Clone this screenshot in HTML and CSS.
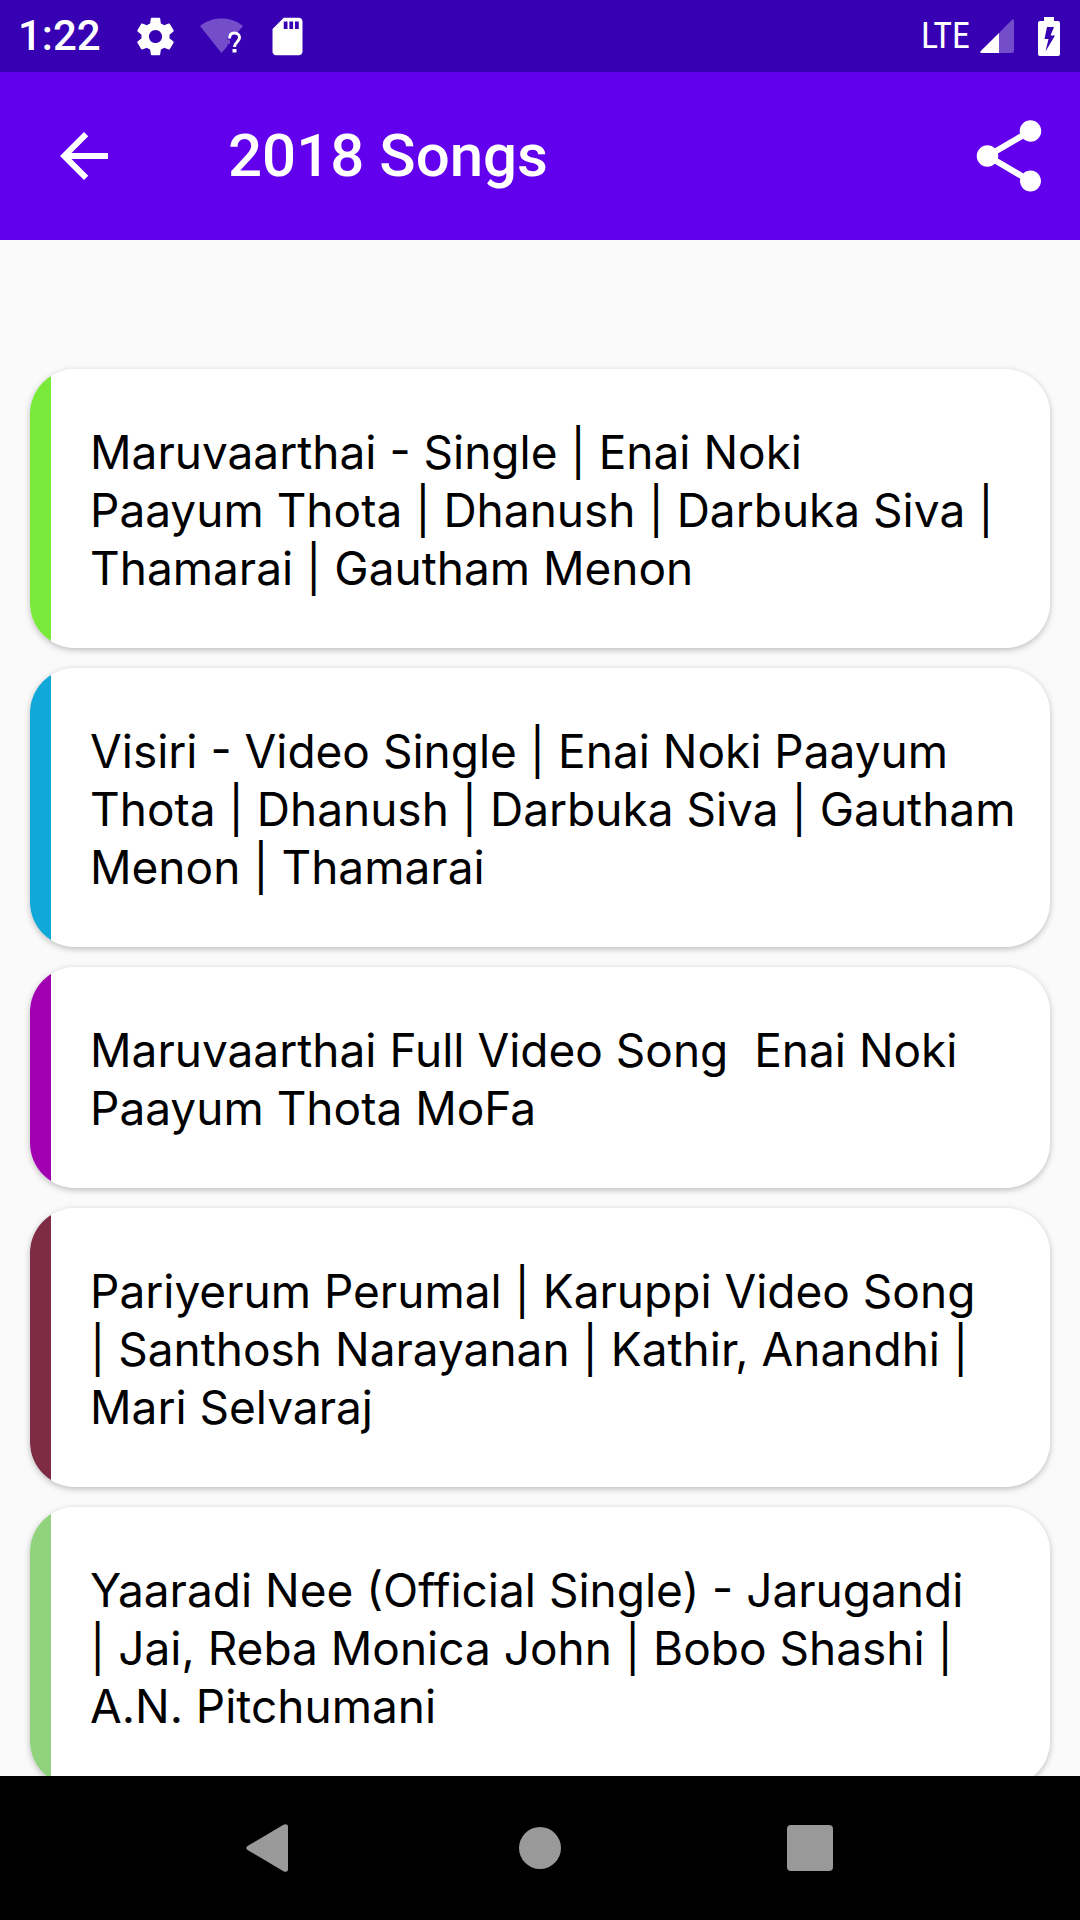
FILE: index.html
```html
<!DOCTYPE html>
<html lang="en">
<head>
<meta charset="utf-8">
<meta name="viewport" content="width=device-width, initial-scale=1">
<title>2018 Songs</title>
<link rel="stylesheet" href="styles.css">
</head>
<body>
<div class="status-bar">
  <div class="status-left">
    <span class="clock">1:22</span>
    <svg class="status-icon gear" viewBox="0 0 24 24" aria-hidden="true"><path d="M19.43 12.98c.04-.32.07-.64.07-.98s-.03-.66-.07-.98l2.11-1.65c.19-.15.24-.42.12-.64l-2-3.46c-.12-.22-.39-.3-.61-.22l-2.49 1c-.52-.4-1.08-.73-1.69-.98l-.38-2.65C14.46 2.18 14.25 2 14 2h-4c-.25 0-.46.18-.49.42l-.38 2.65c-.61.25-1.17.59-1.69.98l-2.49-1c-.23-.09-.49 0-.61.22l-2 3.46c-.13.22-.07.49.12.64l2.11 1.65c-.04.32-.07.65-.07.98s.03.66.07.98l-2.11 1.65c-.19.15-.24.42-.12.64l2 3.46c.12.22.39.3.61.22l2.49-1c.52.4 1.08.73 1.69.98l.38 2.65c.03.24.24.42.49.42h4c.25 0 .46-.18.49-.42l.38-2.65c.61-.25 1.17-.59 1.69-.98l2.49 1c.23.09.49 0 .61-.22l2-3.46c.12-.22.07-.49-.12-.64l-2.11-1.65zM12 15.5c-1.93 0-3.5-1.57-3.5-3.5s1.57-3.5 3.5-3.5 3.5 1.57 3.5 3.5-1.57 3.5-3.5 3.5z"/></svg>
    <svg class="status-icon" viewBox="0 0 45 45" aria-hidden="true"><path class="dim" d="M1 12C7 7 14 4.500 22.500 4.500S38 7 44 12L38.500 18.500C33 16.500 28.500 20 28.500 25.500H31V30H28.500V32L22.500 39Z"/><path class="mark" d="M30.500 24.500C30.500 20.500 33 19 35.500 19C38.500 19 40.500 21 40.500 23.500C40.500 28 35.500 28 35.500 33"/><path d="M33.500 35h4v3.500h-4z"/></svg>
    <svg class="status-icon sd" viewBox="0 0 24 24" aria-hidden="true"><path d="M18 2h-8L4.020 8 4 20c0 1.100.9 2 2 2h12c1.100 0 2-.9 2-2V4c0-1.100-.9-2-2-2zm-6 6h-2V4h2v4zm3 0h-2V4h2v4zm3 0h-2V4h2v4z"/></svg>
  </div>
  <div class="status-right">
    <span class="network">LTE</span>
    <svg class="signal" viewBox="0 0 34 34" aria-hidden="true"><path class="dim" d="M19 14 32 .8Q34-.6 34 2V32Q34 34 32 34H19Z"/><path d="M19 14V34H2Q-.8 34 .8 32Z"/></svg>
    <svg class="battery" viewBox="0 0 22 39" aria-hidden="true"><path fill-rule="evenodd" d="M6 0H16V4H20Q22 4 22 6V37Q22 39 20 39H2Q0 39 0 37V6Q0 4 2 4H6ZM9 10L6.500 22H10.500L7.500 34.500L17 18.500H12.500L16 10Z"/></svg>
  </div>
</div>
<header class="app-bar">
  <button class="icon-button" type="button" aria-label="Back"><svg class="back" viewBox="0 0 24 24"><path d="M20 11H7.830l5.590-5.590L12 4l-8 8 8 8 1.410-1.410L7.830 13H20v-2z"/></svg></button>
  <h1 class="title">2018 Songs</h1>
  <button class="icon-button" type="button" aria-label="Share"><svg class="share" viewBox="0 0 24 24"><path d="M18 16.080c-.76 0-1.440.3-1.960.77L8.910 12.700c.05-.23.09-.46.09-.7s-.04-.47-.09-.7l7.050-4.110c.54.5 1.250.81 2.040.81 1.660 0 3-1.340 3-3s-1.340-3-3-3-3 1.340-3 3c0 .24.04.47.09.7L8.040 9.810C7.500 9.310 6.790 9 6 9c-1.660 0-3 1.340-3 3s1.340 3 3 3c.79 0 1.500-.31 2.040-.81l7.120 4.160c-.05.21-.08.43-.08.65 0 1.610 1.310 2.920 2.920 2.920s2.920-1.310 2.920-2.920-1.310-2.920-2.920-2.920z"/></svg></button>
</header>
<main class="content">
  <ul class="songs">
    <li class="song lime">Maruvaarthai - Single | Enai Noki<br>Paayum Thota | Dhanush | Darbuka Siva |<br>Thamarai | Gautham Menon</li>
    <li class="song blue">Visiri - Video Single | Enai Noki Paayum<br>Thota | Dhanush | Darbuka Siva | Gautham<br>Menon | Thamarai</li>
    <li class="song purple">Maruvaarthai Full Video Song&nbsp; Enai Noki<br>Paayum Thota MoFa</li>
    <li class="song maroon">Pariyerum Perumal | Karuppi Video Song<br>| Santhosh Narayanan | Kathir, Anandhi |<br>Mari Selvaraj</li>
    <li class="song green">Yaaradi Nee (Official Single) - Jarugandi<br>| Jai, Reba Monica John | Bobo Shashi |<br>A.N. Pitchumani</li>
  </ul>
</main>
<nav class="nav-bar" aria-label="System">
  <button class="nav-button" type="button" aria-label="Back"><svg viewBox="0 0 48 48"><path d="M1.500 22 37.500 .8Q42-1 42 3V45Q42 49 37.500 47.200L1.500 26Q-1 24 1.500 22Z"/></svg></button>
  <button class="nav-button" type="button" aria-label="Home"><svg viewBox="0 0 48 48"><circle cx="24" cy="24" r="21"/></svg></button>
  <button class="nav-button" type="button" aria-label="Recent apps"><svg viewBox="0 0 48 48"><rect x="1" y="1" width="46" height="46" rx="4"/></svg></button>
</nav>
</body>
</html>
```
FILE: styles.css
```css
* {
  box-sizing: border-box;
}

body {
  margin: 0;
  height: 100vh;
  display: flex;
  flex-direction: column;
  background: #fafafa;
  color: #000;
  font-family: Roboto, sans-serif;
}

button {
  display: flex;
  align-items: center;
  justify-content: center;
  padding: 0;
  border: 0;
  background: none;
  color: inherit;
}

svg {
  display: block;
  flex: none;
  fill: currentColor;
}

.status-bar {
  flex: none;
  display: flex;
  align-items: center;
  justify-content: space-between;
  height: 72px;
  padding: 0 20px 0 18px;
  background: #3700b3;
  color: #fff;
}

.status-left,
.status-right {
  display: flex;
  align-items: center;
}

.status-left {
  gap: 21px;
}

.status-right {
  gap: 10px;
}

.clock {
  margin-right: 11px;
  font-size: 42px;
  font-weight: 500;
  line-height: 48px;
}

.network {
  font-family: "Liberation Sans Narrow", "Roboto Condensed", Roboto, sans-serif;
  font-size: 36px;
  line-height: 48px;
}

.status-icon {
  width: 45px;
  height: 45px;
}

.dim {
  opacity: 0.3;
}

.mark {
  fill: none;
  stroke: currentColor;
  stroke-width: 3px;
}

.signal {
  width: 34px;
  height: 34px;
}

.battery {
  width: 22px;
  height: 39px;
  margin-left: 14px;
}

.app-bar {
  flex: none;
  display: flex;
  align-items: center;
  height: 168px;
  padding: 0 28px 0 48px;
  background: #6200ee;
  color: #fff;
}

.title {
  flex: 1;
  margin: 0 0 0 108px;
  font-size: 60px;
  font-weight: 500;
  line-height: 74px;
}

.back {
  width: 72px;
  height: 72px;
}

.share {
  width: 86px;
  height: 86px;
}

.content {
  flex: 1;
  min-height: 0;
  overflow-y: auto;
  scrollbar-width: none;
  padding: 129px 30px 0;
}

.songs {
  display: flex;
  flex-direction: column;
  gap: 20px;
  margin: 0;
  padding: 0;
  list-style: none;
}

.song {
  padding: 54px 20px 51px 60px;
  border-radius: 45px;
  background: linear-gradient(to right, var(--stripe) 21px, #fff 21px);
  box-shadow: 0 2px 6px rgba(0, 0, 0, 0.25);
  font-family: Inter, sans-serif;
  font-size: 46px;
  line-height: 58px;
}

.lime { --stripe: #7aea3a; }
.blue { --stripe: #10a8d8; }
.purple { --stripe: #a000b0; }
.maroon { --stripe: #7d2c44; }
.green { --stripe: #90d37c; }

.nav-bar {
  flex: none;
  display: flex;
  align-items: center;
  justify-content: center;
  gap: 126px;
  height: 144px;
  background: #000;
  color: #999;
}

.nav-button {
  width: 144px;
  height: 144px;
}

.nav-button svg {
  width: 48px;
  height: 48px;
}
```
